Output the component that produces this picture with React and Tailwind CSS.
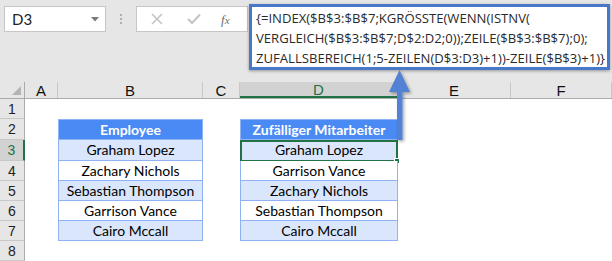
import React from "react";

const cols = [
  { key: "A", w: "w-[33px]" },
  { key: "B", w: "w-[145px]" },
  { key: "C", w: "w-[37px]" },
  { key: "D", w: "w-[158px]" },
  { key: "E", w: "w-[113px]" },
  { key: "F", w: "w-[101px]" },
];

const rowHeights = ["h-[20px]", "h-[21px]", "h-[21px]", "h-[20px]", "h-[20px]", "h-[20px]", "h-[20px]", "h-[20px]"];

const colB = ["Employee", "Graham Lopez", "Zachary Nichols", "Sebastian Thompson", "Garrison Vance", "Cairo Mccall"];
const colD = ["Zufälliger Mitarbeiter", "Graham Lopez", "Garrison Vance", "Zachary Nichols", "Sebastian Thompson", "Cairo Mccall"];

function TableCell({ text, idx }) {
  const header = idx === 0;
  const fill = header ? "bg-[#4a8af4] text-white font-bold" : idx % 2 === 1 ? "bg-[#dae6fb] text-black" : "bg-white text-black";
  return (
    <div
      className={`h-full w-full flex items-center justify-center border-x border-b border-[#8fb3f2] ${header ? "border-t" : ""} ${fill}`}
    >
      {text}
    </div>
  );
}

export default function App() {
  return (
    <div className="relative w-[612px] h-[261px] overflow-hidden bg-white text-[14px] leading-none" style={{ fontFamily: "Lato, 'Liberation Sans', sans-serif" }}>
      {/* toolbar */}
      <div className="h-[82px] bg-[#e6e6e6] relative">
        <div className="absolute left-[4px] top-[6px] w-[102px] h-[26px] bg-white border border-[#c6c6c6] flex items-center pl-[7px] pr-[6px] justify-between text-[#222] text-[15px]">
          <span>D3</span>
          <svg width="8" height="5" viewBox="0 0 8 5"><path d="M0 0 L8 0 L4 4.5 Z" fill="#7a7a7a" /></svg>
        </div>
        <div className="absolute left-[120px] top-[14px] flex flex-col gap-[2px]">
          <div className="w-[2px] h-[2px] bg-[#b0b0b0]" />
          <div className="w-[2px] h-[2px] bg-[#b0b0b0]" />
          <div className="w-[2px] h-[2px] bg-[#b0b0b0]" />
        </div>
        <div className="absolute left-[136px] top-[6px] w-[112px] h-[26px] bg-white border border-[#c6c6c6] flex items-center">
          <svg className="ml-[14px]" width="12" height="12" viewBox="0 0 12 12"><path d="M1 1 L11 11 M11 1 L1 11" stroke="#c4c4c4" strokeWidth="1.6" /></svg>
          <svg className="ml-[24px]" width="14" height="12" viewBox="0 0 14 12"><path d="M1 6 L5 10 L13 1.5" stroke="#c4c4c4" strokeWidth="2" fill="none" /></svg>
          <span className="ml-[20px] text-[#6f6f6f] italic text-[13px]" style={{ fontFamily: "'Liberation Serif', serif" }}>f<span className="text-[11px]">x</span></span>
        </div>
        <div className="absolute left-[249px] top-[4px] w-[361px] h-[66px] bg-white border-[3px] border-[#4a78c8] shadow-[0_1px_3px_rgba(0,0,0,0.35)] px-[4px] pt-[1px] text-[13.1px] leading-[20px] text-[#2a2a2a] whitespace-nowrap overflow-hidden" style={{ fontFamily: "'Open Sans', sans-serif" }}>
          <div>{"{=INDEX($B$3:$B$7;KGRÖSSTE(WENN(ISTNV("}</div>
          <div>{"VERGLEICH($B$3:$B$7;D$2:D2;0));ZEILE($B$3:$B$7);0);"}</div>
          <div>{"ZUFALLSBEREICH(1;5-ZEILEN(D$3:D3)+1))-ZEILE($B$3)+1)}"}</div>
        </div>
      </div>

      {/* column header row */}
      <div className="flex h-[17px] bg-[#e6e6e6] border-b border-[#ababab]">
        <div className="w-[25px] h-full border-r border-[#ababab] relative">
          <svg className="absolute right-[3px] bottom-[3px]" width="9" height="9" viewBox="0 0 9 9"><path d="M9 0 L9 9 L0 9 Z" fill="#b4b4b4" /></svg>
        </div>
        {cols.map((c) => (
          <div
            key={c.key}
            className={`${c.w} h-full flex items-center justify-center border-r border-[#c8c8c8] text-[15px] ${c.key === "D" ? "bg-[#d2d2d2] text-[#217346] border-b-2 border-b-[#217346]" : "text-[#111]"}`}
            style={{ fontFamily: "'Liberation Sans', sans-serif" }}
          >
            {c.key}
          </div>
        ))}
      </div>

      {/* rows */}
      {rowHeights.map((h, r) => {
        const rowNum = r + 1;
        const selected = rowNum === 3;
        return (
          <div key={rowNum} className={`flex ${h}`}>
            <div
              className={`w-[25px] h-full flex items-center justify-center border-b border-[#c8c8c8] text-[14px] ${selected ? "bg-[#d2d2d2] text-[#217346] border-r-2 border-r-[#217346]" : "bg-[#e6e6e6] text-[#222] border-r border-r-[#ababab]"}`}
              style={{ fontFamily: "'Liberation Sans', sans-serif" }}
            >
              {rowNum}
            </div>
            <div className="w-[33px] h-full" />
            <div className="w-[145px] h-full">
              {rowNum >= 2 && rowNum <= 7 && <TableCell text={colB[rowNum - 2]} idx={rowNum - 2} />}
            </div>
            <div className="w-[37px] h-full" />
            <div className="w-[158px] h-full relative">
              {rowNum >= 2 && rowNum <= 7 && <TableCell text={colD[rowNum - 2]} idx={rowNum - 2} />}
              {selected && (
                <div className="absolute left-0 top-0 w-[158px] h-[22px] border-2 border-[#217346] pointer-events-none">
                  <div className="absolute right-[-4px] bottom-[-4px] w-[6px] h-[6px] bg-[#217346] border border-white" />
                </div>
              )}
            </div>
            <div className="w-[113px] h-full" />
            <div className="w-[101px] h-full" />
          </div>
        );
      })}

      {/* arrow */}
      <svg className="absolute left-[384px] top-[66px]" width="32" height="80" viewBox="0 0 32 80">
        <defs>
          <filter id="sh" x="-50%" y="-20%" width="200%" height="150%">
            <feDropShadow dx="1.5" dy="1.5" stdDeviation="1.5" floodColor="#000" floodOpacity="0.35" />
          </filter>
        </defs>
        <path d="M15.5 4 L26 26 L18.5 26 L18.5 74 L13 74 L13 26 L5 26 Z" fill="#5282d4" filter="url(#sh)" />
      </svg>
    </div>
  );
}
